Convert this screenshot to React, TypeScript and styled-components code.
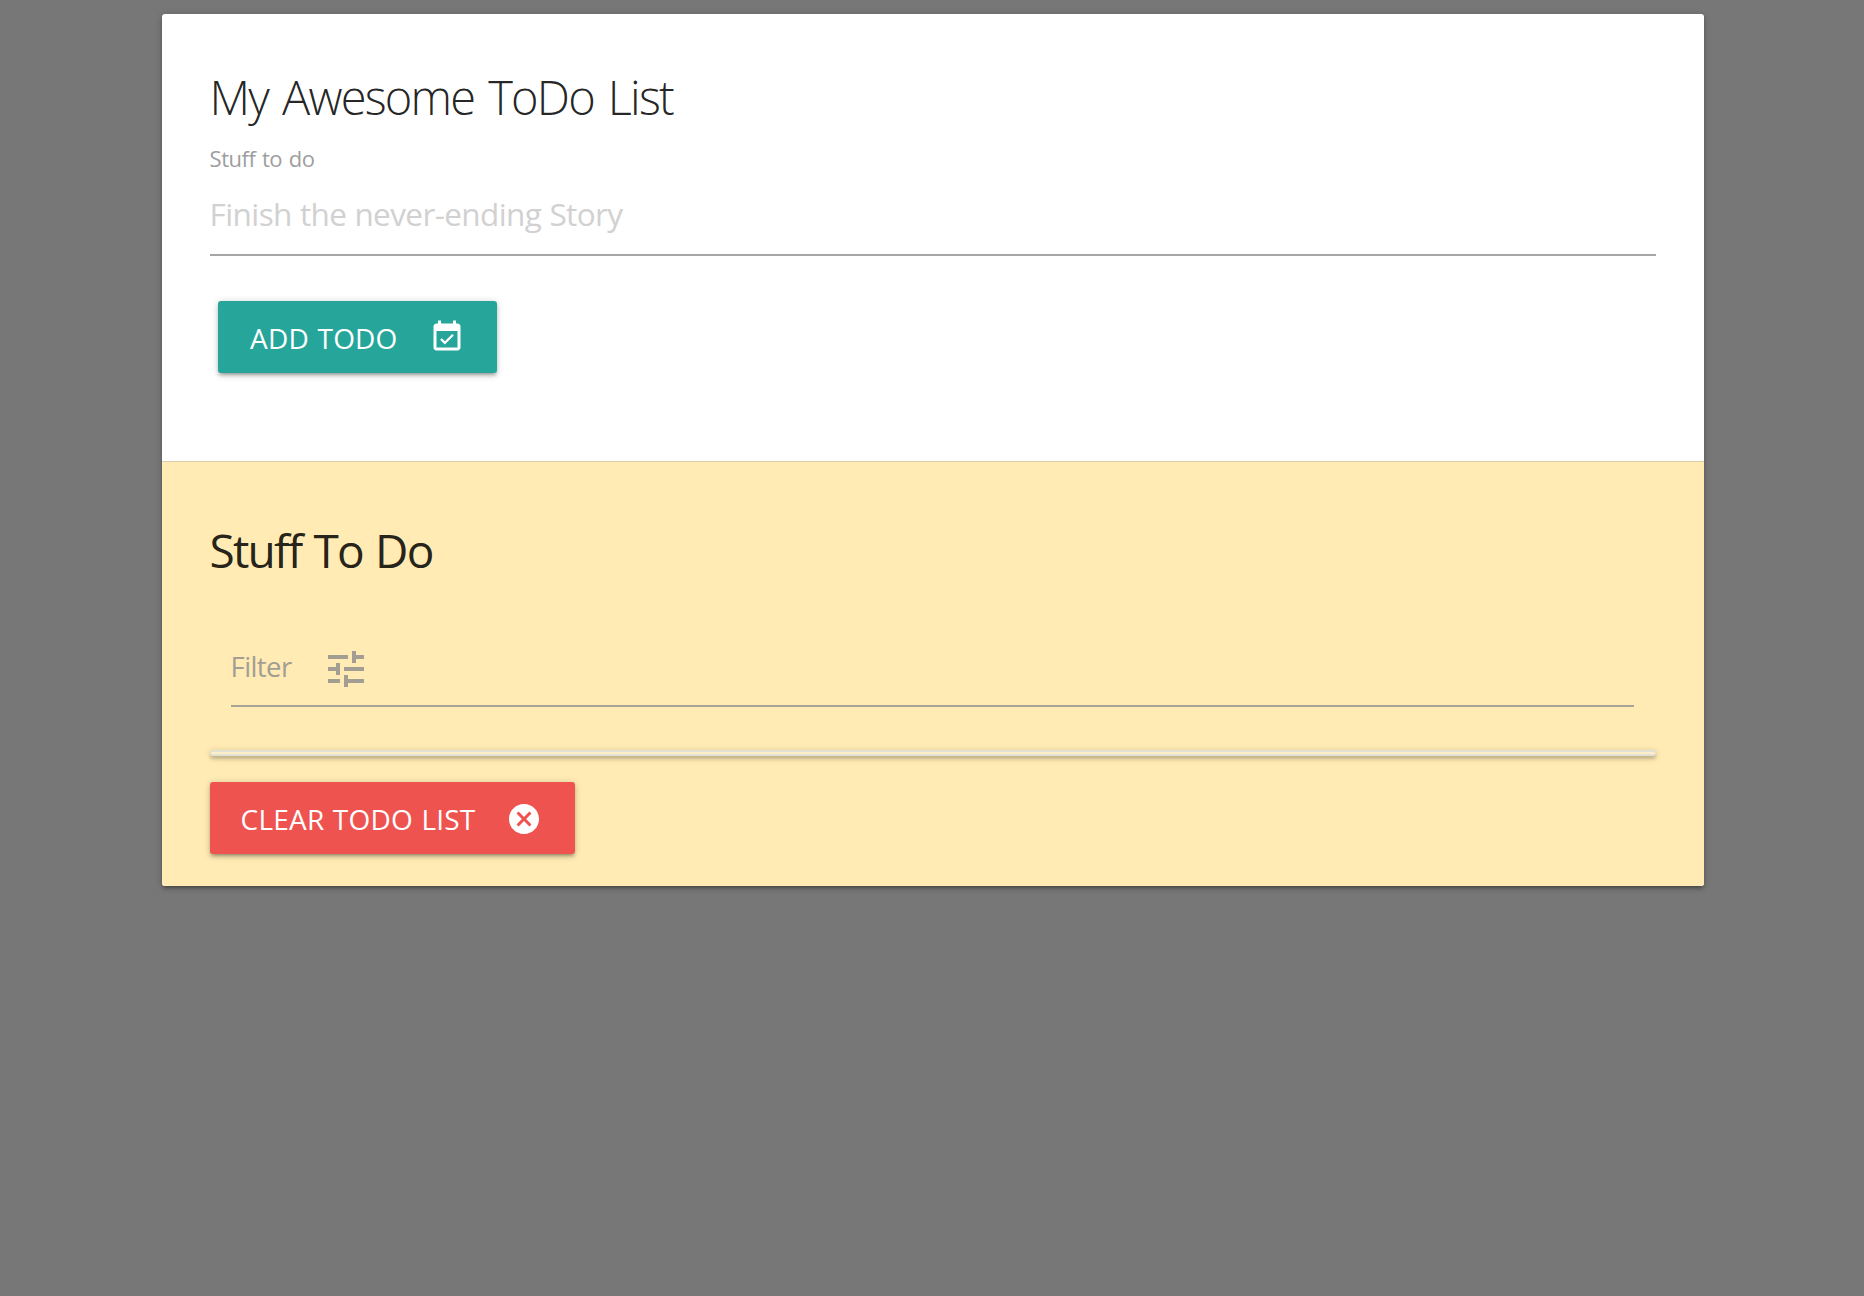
import React from "react";
import styled, { createGlobalStyle } from "styled-components";
import { MdCancel, MdTune } from "react-icons/md";

const GlobalStyle = createGlobalStyle`
  *, *::before, *::after { box-sizing: border-box; }
  body {
    margin: 0;
    min-height: 100vh;
    background: #777777;
    color: rgba(0, 0, 0, 0.87);
    font-family: "Open Sans", "Noto Sans", sans-serif;
  }
`;

const raised = `0 3px 3px 0 rgba(0, 0, 0, 0.14), 0 4.5px 1.5px -3px rgba(0, 0, 0, 0.12), 0 1.5px 7.5px 0 rgba(0, 0, 0, 0.2)`;

const Page = styled.main`
  display: flex;
  padding: 14px 160px 0 161.6px;
`;

const Card = styled.section`
  flex: 1;
  height: 872px;
  display: flex;
  flex-direction: column;
  border-radius: 3px;
  background: #ffffff;
  box-shadow: ${raised};
`;

const CardContent = styled.div`
  height: 447px;
  display: flex;
  flex-direction: column;
  align-items: flex-start;
  padding: 49.5px 48px 0;
`;

const CardAction = styled.div`
  flex: 1;
  display: flex;
  flex-direction: column;
  align-items: flex-start;
  padding: 55px 48px 0;
  border-top: 1px solid rgba(160, 160, 160, 0.4);
  border-radius: 0 0 3px 3px;
  background: #ffebb3;
`;

const Title = styled.h1`
  margin: 0;
  font-size: 47px;
  line-height: 66px;
  font-weight: 300;
  letter-spacing: -1.8px;
  word-spacing: 3.5px;
`;

const Label = styled.label`
  margin-top: 13.5px;
  font-size: 22px;
  line-height: 30px;
  letter-spacing: -0.5px;
  word-spacing: 1.5px;
  color: #9e9e9e;
`;

const TextInput = styled.input`
  width: 100%;
  height: 83px;
  padding: 0;
  border: 0;
  border-bottom: 2px solid #a6a6a6;
  outline: none;
  background: transparent;
  font: 400 31.5px "Open Sans", sans-serif;
  letter-spacing: -0.6px;
  word-spacing: 0.5px;
  &::placeholder { color: #d1d1d1; opacity: 1; }
`;

const Button = styled.button<{ $color: string; $width: number }>`
  display: flex;
  align-items: center;
  justify-content: space-between;
  width: ${(p) => p.$width}px;
  height: 72px;
  padding: 0 33px 0 31px;
  border: 0;
  border-radius: 3px;
  background: ${(p) => p.$color};
  box-shadow: ${raised};
  color: #ffffff;
  font: 400 28px "Open Sans", sans-serif;
  text-transform: uppercase;
`;

const AddButton = styled(Button)`
  margin: 45px 0 0 8px;
  padding: 0 32px 0 32.5px;
`;

const ClearButton = styled(Button)`
  margin-top: 26px;
`;

const ButtonText = styled.span`
  padding-top: 2px;
  letter-spacing: 0.2px;
  word-spacing: 1px;
  white-space: nowrap;
`;

const CalendarIcon = styled.svg`
  width: 36px;
  height: 36px;
  fill: currentColor;
`;

const CancelIcon = styled(MdCancel)`
  margin-top: 2px;
`;

const Heading = styled.h2`
  margin: 0;
  font-size: 46px;
  line-height: 66px;
  font-weight: 400;
  letter-spacing: -1.8px;
  word-spacing: 2px;
`;

const Filter = styled.label`
  align-self: stretch;
  display: flex;
  align-items: center;
  height: 74px;
  margin: 50px 22px 0 21px;
  border-bottom: 2px solid #a8a496;
  font-size: 27.5px;
  letter-spacing: -0.6px;
  color: #a29e93;
`;

const FilterText = styled.span`
  padding-bottom: 5px;
`;

const FilterIcon = styled(MdTune)`
  margin-left: 30px;
`;

const Collection = styled.ul`
  align-self: stretch;
  height: 6px;
  margin: 43px 0 0;
  padding: 0;
  border: solid #e3e1d3;
  border-width: 2px 1px;
  border-radius: 3px;
  background: #fdeec8;
  box-shadow: ${raised};
`;

export default function App() {
  return (
    <>
      <GlobalStyle />
      <Page>
        <Card>
          <CardContent>
            <Title>My Awesome ToDo List</Title>
            <Label htmlFor="todo">Stuff to do</Label>
            <TextInput id="todo" placeholder="Finish the never-ending Story" />
            <AddButton $color="#26a69a" $width={279}>
              <ButtonText>Add Todo</ButtonText>
              <CalendarIcon viewBox="0 0 24 24">
                <path d="M16.53 11.06L15.47 10l-4.88 4.88-2.12-2.12-1.06 1.06L10.59 17l5.94-5.94zM19 3h-1V1h-2v2H8V1H6v2H5c-1.11 0-1.99.9-1.99 2L3 19c0 1.1.89 2 2 2h14c1.1 0 2-.9 2-2V5c0-1.1-.9-2-2-2zm0 16H5V8h14v11z" />
              </CalendarIcon>
            </AddButton>
          </CardContent>
          <CardAction>
            <Heading>Stuff To Do</Heading>
            <Filter>
              <FilterText>Filter</FilterText>
              <FilterIcon size={48} />
            </Filter>
            <Collection />
            <ClearButton $color="#ef5350" $width={365}>
              <ButtonText>Clear Todo List</ButtonText>
              <CancelIcon size={36} />
            </ClearButton>
          </CardAction>
        </Card>
      </Page>
    </>
  );
}
